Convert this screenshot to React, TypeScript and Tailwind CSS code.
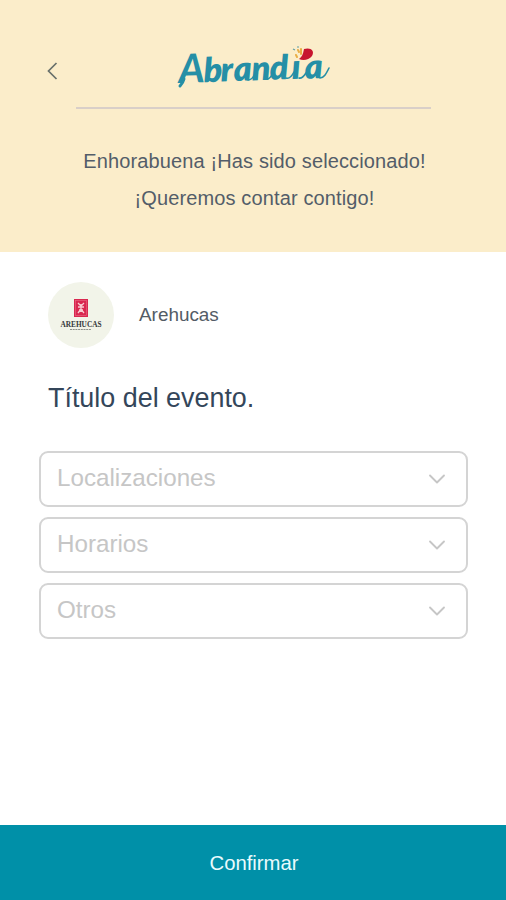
import { ChevronDown } from "lucide-react"

const fields = ["Localizaciones", "Horarios", "Otros"]

function Logo() {
  return (
    <svg width="156" height="50" viewBox="0 0 156 50" role="img" aria-label="Abrandia">
      <g transform="rotate(-2 4 42)">
        <text
          y="42"
          fill="#258fa6"
          className="font-['Lato',sans-serif] text-[34px] font-extrabold italic"
        >
          <tspan x="3" className="text-[40px] font-bold">A</tspan>
          <tspan x="28 45 58 76 94 116 129">brandıa</tspan>
        </text>
      </g>

      {/* brush swashes joining the letters */}
      <g fill="none" stroke="#258fa6" strokeLinecap="round" strokeWidth="1.6">
        <path d="M8 38 C7 42 6 43 4 45" strokeWidth="3" />
        <path d="M72 39 C75 39 77 37 79 33" />
        <path d="M90 38 C93 39 95 36 97 32" />
        <path d="M110 37 C113 38 116 35 118 31" />
        <path d="M123 37 C126 38 128 35 130 32" />
        <path d="M144 37 C148 37 150 33 153 27" />
      </g>

      {/* flower over the i */}
      <path d="M128 8 C135 6 139 10 136 15 C133 19 127 20 123 18 C126 16 127 13 128 8Z" fill="#c7152f" />
      <path d="M122 9 L123 11 M120 14 L121 16 M125 8 L125 13" stroke="#e9ad45" strokeWidth="2" strokeLinecap="round" />
      <path d="M117 8 L119 9 M121 6 L123 6" stroke="#609ea2" strokeWidth="1.2" />
    </svg>
  )
}

function BrandAvatar() {
  return (
    <div className="flex h-[66px] w-[66px] shrink-0 flex-col items-center rounded-full bg-[#f2f4e9] pt-[17px]">
      <svg width="14" height="18" viewBox="0 0 14 18" className="shrink-0">
        <rect width="14" height="18" fill="#d92850" />
        <rect x="1.5" y="1.5" width="11" height="15" fill="none" stroke="#e96c85" strokeWidth="0.6" />
        <path d="M4 4 L7 7 L10 4 M4 14 L7 10 L10 14 M4 8 H10 M5 11 H9 M7 5 V13" fill="none" stroke="#f8ccd2" strokeWidth="1.3" />
      </svg>
      <svg width="56" height="20" viewBox="0 0 56 20" className="shrink-0 overflow-visible">
        <text
          x="7.5"
          y="9.5"
          textLength="41"
          lengthAdjust="spacingAndGlyphs"
          fill="#34383a"
          className="font-['Liberation_Serif',serif] text-[8.5px] leading-none font-bold"
        >
          AREHUCAS
        </text>
        <path d="M17 12.5 H38" stroke="#8b8f89" strokeWidth="1" strokeDasharray="2 0.7" />
      </svg>
    </div>
  )
}

export default function App() {
  return (
    <main className="flex h-[900px] w-[506px] flex-col bg-white font-['Liberation_Sans',Arial,sans-serif]">

      {/* HEADER */}

      <header className="h-[252px] bg-[#fbedca]">
        <div className="flex h-[107px] items-start pl-[46px]">
          <button aria-label="Volver" className="mt-[61px]">
            <svg width="12" height="20" viewBox="0 0 12 20" fill="none">
              <path d="M10.5 2 L2.5 10 L10.5 18" stroke="#68706b" strokeWidth="1.7" />
            </svg>
          </button>
          <div className="mt-[41px] ml-[118px]">
            <Logo />
          </div>
        </div>

        <div className="mx-auto h-[2px] w-[355px] bg-[#d9cfc8]" />

        <div className="mt-[34px] pl-[3px] text-center text-[20px] leading-[36.5px] tracking-[0.13px] text-[#535d69]">
          <p>Enhorabuena ¡Has sido seleccionado!</p>
          <p>¡Queremos contar contigo!</p>
        </div>
      </header>

      {/* EVENT */}

      <section className="flex-1">
        <div className="flex items-center pt-[30px] pl-12">
          <BrandAvatar />
          <span className="ml-[25px] text-[18.9px] text-[#535c66]">Arehucas</span>
        </div>

        <h1 className="mt-[30px] pl-12 text-[26.9px] leading-[40px] text-[#34465a]">
          Título del evento.
        </h1>

        <div className="mt-[32.5px] flex flex-col gap-[10px] pr-[38px] pl-[39px]">
          {fields.map(field => (
            <button
              key={field}
              className="flex h-[56px] items-center justify-between rounded-[9px] border-2 border-[#d4d4d4] pr-[15px] pl-4 text-[24.2px] text-[#c6c6c6]"
            >
              <span>{field}</span>
              <ChevronDown size={28} strokeWidth={1.6} />
            </button>
          ))}
        </div>
      </section>

      {/* CONFIRM */}

      <button className="h-[75px] bg-[#0090a8] pt-px pl-[2px] text-[20.3px] text-[#e9fbfd]">
        Confirmar
      </button>
    </main>
  )
}
